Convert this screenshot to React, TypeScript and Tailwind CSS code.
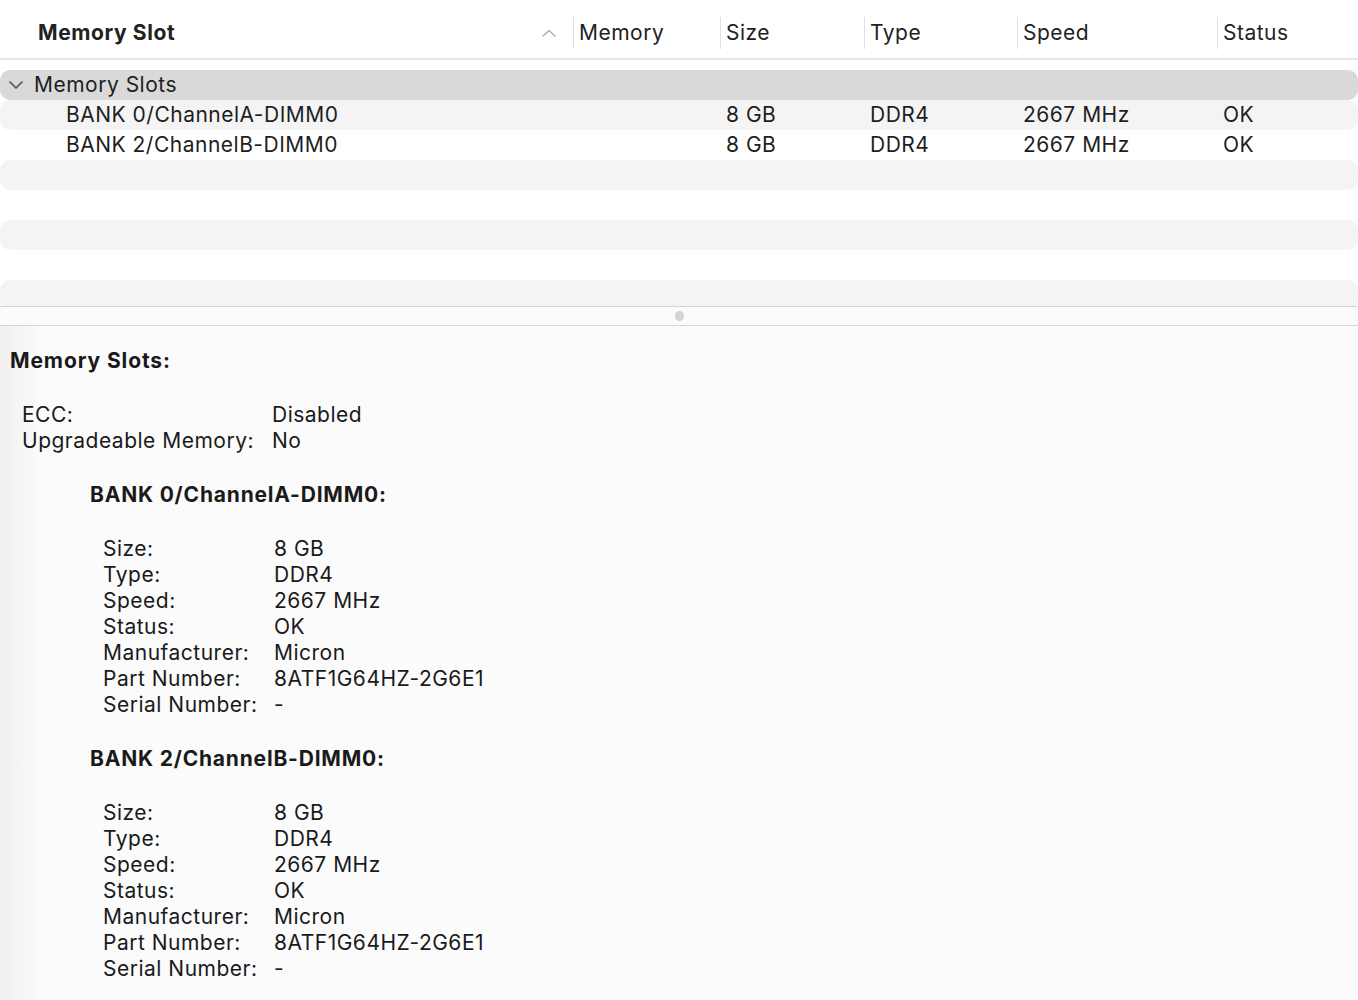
import React from 'react';

const font = { fontFamily: 'Inter, "Noto Sans", sans-serif' };

const cols = [
  { label: 'Memory', w: 'w-[147px]' },
  { label: 'Size', w: 'w-[144px]' },
  { label: 'Type', w: 'w-[153px]' },
  { label: 'Speed', w: 'w-[200px]' },
  { label: 'Status', w: 'flex-1' },
];

const slots = [
  {
    name: 'BANK 0/ChannelA-DIMM0',
    size: '8 GB',
    type: 'DDR4',
    speed: '2667 MHz',
    status: 'OK',
  },
  {
    name: 'BANK 2/ChannelB-DIMM0',
    size: '8 GB',
    type: 'DDR4',
    speed: '2667 MHz',
    status: 'OK',
  },
];

const details = (s: (typeof slots)[number]) => [
  ['Size:', s.size],
  ['Type:', s.type],
  ['Speed:', s.speed],
  ['Status:', s.status],
  ['Manufacturer:', 'Micron'],
  ['Part Number:', '8ATF1G64HZ-2G6E1'],
  ['Serial Number:', '-'],
];

function Row({ shade, children }: { shade?: string; children?: React.ReactNode }) {
  return (
    <div className={`flex h-[30px] shrink-0 items-center rounded-[10px] text-[21px] text-[#1e1e1e] ${shade ?? ''}`}>
      {children}
    </div>
  );
}

export default function App() {
  return (
    <div className="flex h-[1000px] w-[1358px] flex-col overflow-hidden bg-white tracking-[0.5px]" style={font}>
      {/* table header */}
      <div className="flex h-[60px] shrink-0 items-center border-b-2 border-[#e6e6e6] pt-[7px] text-[21px] text-[#222]">
        <div className="flex w-[573px] items-center pl-[38px] pr-[16px]">
          <span className="flex-1 font-bold tracking-[0.6px]">Memory Slot</span>
          <svg width="16" height="10" viewBox="0 0 16 10" fill="none" stroke="#b0b0b0" strokeWidth="1.6" strokeLinecap="round" strokeLinejoin="round">
            <path d="M2 8 L8 2.5 L14 8" />
          </svg>
        </div>
        {cols.map((c) => (
          <div key={c.label} className={`${c.w} flex h-[32px] items-center border-l border-[#e0e0e0] pl-[5px]`}>
            {c.label}
          </div>
        ))}
      </div>

      {/* table body */}
      <div className="flex h-[246px] shrink-0 flex-col overflow-hidden pt-[10px]">
        <Row shade="bg-[#d9d9d9]">
          <svg className="ml-[8px] mr-[10px]" width="16" height="10" viewBox="0 0 16 10" fill="none" stroke="#555" strokeWidth="1.7" strokeLinecap="round" strokeLinejoin="round">
            <path d="M2 2 L8 8 L14 2" />
          </svg>
          <span>Memory Slots</span>
        </Row>
        {slots.map((s, i) => (
          <Row key={s.name} shade={i % 2 === 0 ? 'bg-[#f4f4f4]' : ''}>
            <span className="w-[726px] pl-[66px]">{s.name}</span>
            <span className="w-[144px]">{s.size}</span>
            <span className="w-[153px]">{s.type}</span>
            <span className="w-[200px]">{s.speed}</span>
            <span className="flex-1">{s.status}</span>
          </Row>
        ))}
        <Row shade="bg-[#f4f4f4]" />
        <Row />
        <Row shade="bg-[#f4f4f4]" />
        <Row />
        <Row shade="bg-[#f4f4f4]" />
      </div>

      {/* split view divider */}
      <div className="flex h-[20px] shrink-0 items-center justify-center border-y border-[#d6d6d6] bg-[#fbfbfb]">
        <div className="h-[10px] w-[9px] rounded-full bg-[#d4d4d4]" />
      </div>

      {/* detail pane */}
      <div className="flex-1 bg-linear-to-r from-[#f0f0f0] from-0% to-[#fbfbfb] to-[3%] text-[21px] text-[#1a1a1a]">
        <div className="pl-[10px] pt-[22px] font-bold leading-[26px] tracking-[0.9px]">Memory Slots:</div>
        <div className="pl-[22px] pt-[28px] leading-[26px]">
          <div className="flex">
            <span className="w-[250px] shrink-0">ECC:</span>
            <span>Disabled</span>
          </div>
          <div className="flex">
            <span className="w-[250px] shrink-0">Upgradeable Memory:</span>
            <span>No</span>
          </div>
        </div>
        {slots.map((s) => (
          <div key={s.name} className="pl-[90px] pt-[28px] leading-[26px]">
            <div className="font-bold tracking-[0.8px]">{s.name}:</div>
            <div className="pl-[13px] pt-[28px]">
              {details(s).map(([k, v]) => (
                <div key={k} className="flex">
                  <span className="w-[171px] shrink-0">{k}</span>
                  <span>{v}</span>
                </div>
              ))}
            </div>
          </div>
        ))}
      </div>
    </div>
  );
}
